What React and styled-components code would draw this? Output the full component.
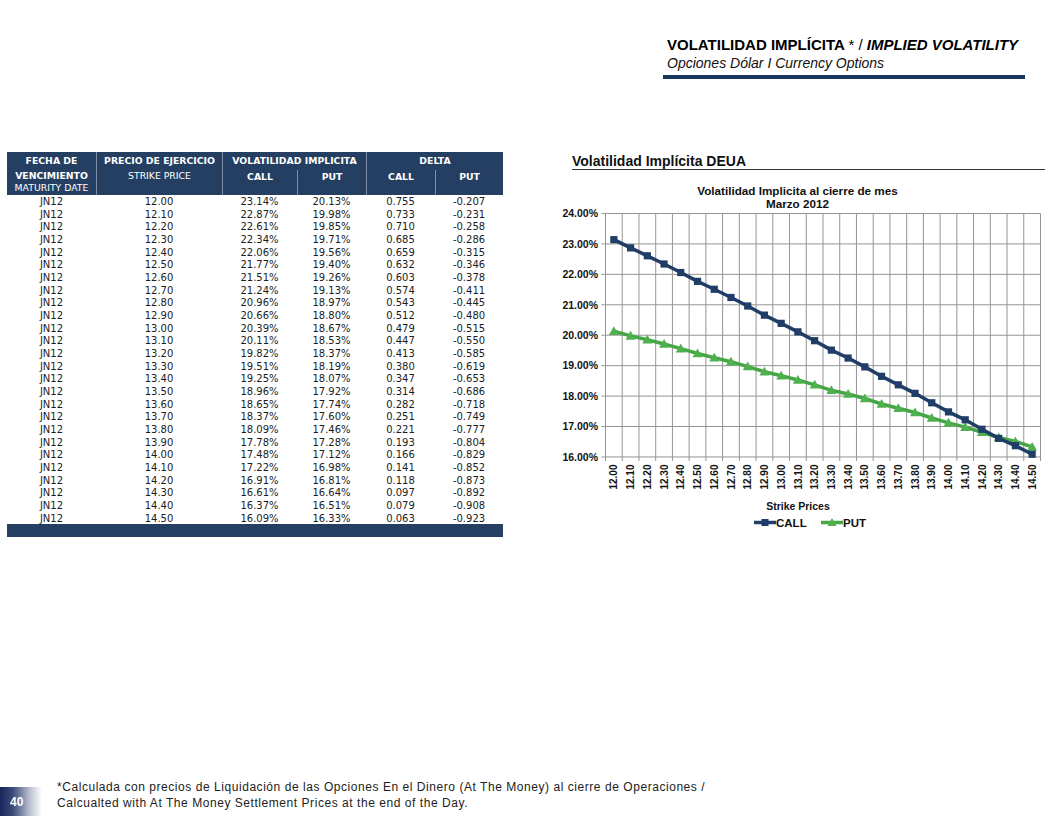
import React from 'react'
import styled, { createGlobalStyle } from 'styled-components'

const strikes = Array.from({ length: 26 }, (_, i) => (12 + i * 0.1).toFixed(2))
const callVol = [23.14, 22.87, 22.61, 22.34, 22.06, 21.77, 21.51, 21.24, 20.96, 20.66, 20.39, 20.11, 19.82, 19.51, 19.25, 18.96, 18.65, 18.37, 18.09, 17.78, 17.48, 17.22, 16.91, 16.61, 16.37, 16.09]
const putVol = [20.13, 19.98, 19.85, 19.71, 19.56, 19.4, 19.26, 19.13, 18.97, 18.8, 18.67, 18.53, 18.37, 18.19, 18.07, 17.92, 17.74, 17.6, 17.46, 17.28, 17.12, 16.98, 16.81, 16.64, 16.51, 16.33]
const callDelta = ['0.755', '0.733', '0.710', '0.685', '0.659', '0.632', '0.603', '0.574', '0.543', '0.512', '0.479', '0.447', '0.413', '0.380', '0.347', '0.314', '0.282', '0.251', '0.221', '0.193', '0.166', '0.141', '0.118', '0.097', '0.079', '0.063']
const putDelta = ['-0.207', '-0.231', '-0.258', '-0.286', '-0.315', '-0.346', '-0.378', '-0.411', '-0.445', '-0.480', '-0.515', '-0.550', '-0.585', '-0.619', '-0.653', '-0.686', '-0.718', '-0.749', '-0.777', '-0.804', '-0.829', '-0.852', '-0.873', '-0.892', '-0.908', '-0.923']

// chart geometry, in page coordinates (the svg viewBox starts where it sits)
const X0 = 605.5
const STEP = 435 / 26
const Y24 = 214
const PER = 30.43
const xAt = i => X0 + STEP * i + STEP / 2
const yAt = v => Y24 + (24 - v) * PER

const GlobalStyle = createGlobalStyle`
  html, body { margin: 0; padding: 0; background: #fff; }
  body { font-family: "Liberation Sans", Arial, sans-serif; color: #111; }
`

const Page = styled.div`
  width: 1054px;
  height: 816px;
  display: flex;
  flex-direction: column;
  overflow: hidden;
`

const Header = styled.header`
  display: flex;
  justify-content: flex-end;
  padding: 36px 29px 0 0;
`

const TitleBlock = styled.div`
  width: 358px;
  padding: 0 0 3px 4px;
  border-bottom: 4px solid #17375e;
`

const Title = styled.div`
  font-size: 15px;
  line-height: 18px;
  font-weight: bold;
  color: #000;
  white-space: nowrap;
`

const Plain = styled.span`
  font-weight: normal;
`

const Italic = styled.span`
  font-style: italic;
`

const Subtitle = styled.div`
  font-size: 14px;
  line-height: 18px;
  font-style: italic;
  color: #111;
`

const Main = styled.main`
  display: flex;
  align-items: flex-start;
  margin-top: 73px;
  padding-left: 7px;
  gap: 52px;
`

const Table = styled.div`
  width: 496px;
  font-family: "DejaVu Sans", Verdana, sans-serif;
`

const cols = '89px 126px 75px 69px 69px 68px'

const HeadGrid = styled.div`
  display: grid;
  grid-template-columns: ${cols};
  grid-template-rows: 18px 25px;
  background: #243f62;
  color: #fff;
  font-size: 9.3px;
  text-align: center;
`

const HeadCell = styled.div`
  grid-column: ${p => p.$col};
  grid-row: ${p => p.$row};
  border-left: ${p => (p.$edge ? 'none' : '1px solid #7d8ea6')};
  line-height: ${p => (p.$sub ? '12px' : '18px')};
  padding-top: ${p => (p.$sub ? '1px' : '0')};
  white-space: nowrap;
`

const HeadLine = styled.div`
  font-weight: ${p => (p.$bold ? 'bold' : 'normal')};
  line-height: ${p => p.$lh || '12px'};
`

const Row = styled.div`
  display: grid;
  grid-template-columns: ${cols};
  height: 12.68px;
  line-height: 13.5px;
  font-size: 10px;
  color: #1c1c1c;
  text-align: center;
  white-space: nowrap;
`

const FootBar = styled.div`
  height: 13px;
  background: #243f62;
`

const ChartCol = styled.section`
  width: 490px;
  display: flex;
  flex-direction: column;
`

const ChartTitle = styled.h2`
  margin: 0 0 0 17px;
  padding-top: 2px;
  font-size: 14px;
  line-height: 15px;
  font-weight: bold;
  color: #111;
  border-bottom: 1.5px solid #333;
`

const Svg = styled.svg`
  display: block;
  font-family: "Liberation Sans", Arial, sans-serif;
`

const Grid = styled.line`
  stroke: #959595;
  stroke-width: 1;
`

const ChartText = styled.text`
  font-weight: bold;
  font-size: ${p => p.$size || 10.5}px;
  fill: #111;
`

const Footer = styled.footer`
  margin-top: auto;
  display: flex;
  align-items: flex-end;
`

const PageNum = styled.div`
  width: 42px;
  height: 29px;
  flex-shrink: 0;
  box-sizing: border-box;
  padding: 8px 0 0 10px;
  background: linear-gradient(to right, #16265a 0%, #3a4a78 30%, #b8bed0 70%, #fff 100%);
  color: #fff;
  font-size: 12px;
  font-weight: bold;
  line-height: 14px;
`

const Note = styled.p`
  margin: 0 0 5px 15px;
  font-size: 12px;
  letter-spacing: 0.55px;
  line-height: 16px;
  color: #222;
`

function Chart() {
  const ticks = [24, 23, 22, 21, 20, 19, 18, 17, 16]
  const callPts = callVol.map((v, i) => `${xAt(i)},${yAt(v)}`).join(' ')
  const putPts = putVol.map((v, i) => `${xAt(i)},${yAt(v)}`).join(' ')
  const bottom = yAt(16)
  return (
    <Svg width="490" height="370" viewBox="555 170.5 490 370">
      <ChartText x="797.5" y="195" textAnchor="middle" $size={11.7}>
        Volatilidad Implicita  al cierre de mes
      </ChartText>
      <ChartText x="797.5" y="208" textAnchor="middle" $size={11.7}>
        Marzo 2012
      </ChartText>

      {ticks.map(t => (
        <g key={t}>
          <Grid x1={X0 - 4} x2={X0 + STEP * 26} y1={yAt(t)} y2={yAt(t)} />
          <ChartText x="598" y={yAt(t) + 3.8} textAnchor="end">
            {t.toFixed(2)}%
          </ChartText>
        </g>
      ))}
      {Array.from({ length: 27 }, (_, i) => (
        <Grid key={i} x1={X0 + STEP * i} x2={X0 + STEP * i} y1={Y24} y2={bottom + 4} />
      ))}
      {strikes.map((s, i) => (
        <ChartText
          key={s}
          $size={10}
          textAnchor="end"
          transform={`translate(${xAt(i) + 3.6} 465) rotate(-90)`}
        >
          {s}
        </ChartText>
      ))}

      <polyline points={putPts} fill="none" stroke="#46a646" strokeWidth="3.5" />
      {putVol.map((v, i) => (
        <polygon
          key={i}
          points={`${xAt(i) - 5},${yAt(v) + 3.8} ${xAt(i) + 5},${yAt(v) + 3.8} ${xAt(i)},${yAt(v) - 5}`}
          fill="#4fb04f"
        />
      ))}
      <polyline points={callPts} fill="none" stroke="#1f3d66" strokeWidth="3.5" />
      {callVol.map((v, i) => (
        <rect key={i} x={xAt(i) - 3.6} y={yAt(v) - 3.6} width="7.2" height="7.2" fill="#1f3d66" />
      ))}

      <ChartText x="798" y="510" textAnchor="middle">Strike Prices</ChartText>

      <line x1="754" x2="776" y1="523" y2="523" stroke="#1f3d66" strokeWidth="3.5" />
      <rect x="761.5" y="519.5" width="7" height="7" fill="#1f3d66" />
      <ChartText x="776" y="527" $size={11.5}>CALL</ChartText>
      <line x1="821" x2="843" y1="523" y2="523" stroke="#46a646" strokeWidth="3.5" />
      <polygon points="827.5,526.5 836.5,526.5 832,518.5" fill="#4fb04f" />
      <ChartText x="843" y="527" $size={11.5}>PUT</ChartText>
    </Svg>
  )
}

export default function App() {
  return (
    <Page>
      <GlobalStyle />
      <Header>
        <TitleBlock>
          <Title>
            VOLATILIDAD IMPLÍCITA <Plain>* / </Plain>
            <Italic>IMPLIED VOLATILITY</Italic>
          </Title>
          <Subtitle>Opciones Dólar I Currency Options</Subtitle>
        </TitleBlock>
      </Header>

      <Main>
        <Table>
          <HeadGrid>
            <HeadCell $col="1" $row="1 / span 2" $edge>
              <HeadLine $bold $lh="18px">FECHA DE</HeadLine>
              <HeadLine $bold>VENCIMIENTO</HeadLine>
              <HeadLine>MATURITY DATE</HeadLine>
            </HeadCell>
            <HeadCell $col="2" $row="1 / span 2">
              <HeadLine $bold $lh="18px">PRECIO DE EJERCICIO</HeadLine>
              <HeadLine>STRIKE PRICE</HeadLine>
            </HeadCell>
            <HeadCell $col="3 / span 2" $row="1">
              <HeadLine $bold $lh="18px">VOLATILIDAD IMPLICITA</HeadLine>
            </HeadCell>
            <HeadCell $col="3" $row="2" $sub>
              <HeadLine $bold>CALL</HeadLine>
            </HeadCell>
            <HeadCell $col="4" $row="2" $sub>
              <HeadLine $bold>PUT</HeadLine>
            </HeadCell>
            <HeadCell $col="5 / span 2" $row="1">
              <HeadLine $bold $lh="18px">DELTA</HeadLine>
            </HeadCell>
            <HeadCell $col="5" $row="2" $sub>
              <HeadLine $bold>CALL</HeadLine>
            </HeadCell>
            <HeadCell $col="6" $row="2" $sub>
              <HeadLine $bold>PUT</HeadLine>
            </HeadCell>
          </HeadGrid>
          {strikes.map((s, i) => (
            <Row key={s}>
              <span>JN12</span>
              <span>{s}</span>
              <span>{callVol[i].toFixed(2)}%</span>
              <span>{putVol[i].toFixed(2)}%</span>
              <span>{callDelta[i]}</span>
              <span>{putDelta[i]}</span>
            </Row>
          ))}
          <FootBar />
        </Table>

        <ChartCol>
          <ChartTitle>Volatilidad Implícita DEUA</ChartTitle>
          <Chart />
        </ChartCol>
      </Main>

      <Footer>
        <PageNum>40</PageNum>
        <Note>
          *Calculada con precios de Liquidación de las Opciones En el Dinero (At The Money) al cierre de Operaciones /
          <br />
          Calcualted with At The Money Settlement Prices at the end of the Day.
        </Note>
      </Footer>
    </Page>
  )
}
